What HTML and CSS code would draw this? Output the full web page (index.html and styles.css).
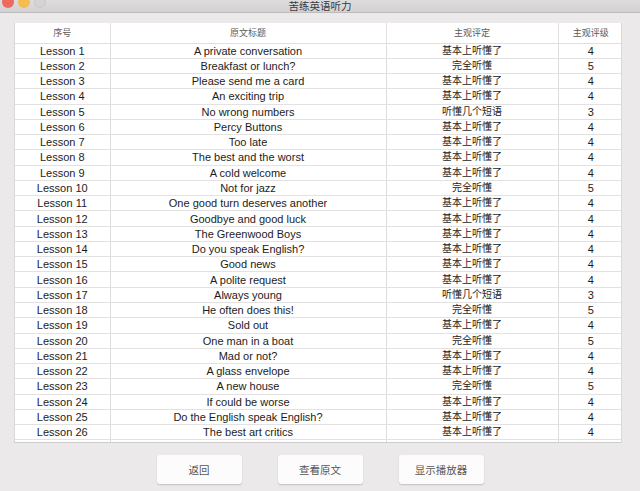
FILE: index.html
```html
<!DOCTYPE html>
<html lang="zh">
<head>
    <meta charset="UTF-8">
    <title>苦练英语听力</title>
    <link rel="stylesheet" href="styles.css">
</head>
<body>
    <div class="window">
        <div class="titlebar">
            <div class="lights">
                <span class="light red"></span>
                <span class="light yellow"></span>
                <span class="light grey"></span>
            </div>
            <div class="title">苦练英语听力</div>
            <div></div>
        </div>

        <div class="content">
            <div class="table-wrap">
                <table class="lessons">
                    <colgroup>
                        <col class="c-num">
                        <col class="c-title">
                        <col class="c-eval">
                        <col class="c-grade">
                    </colgroup>
                    <thead>
                        <tr>
                            <th>序号</th>
                            <th>原文标题</th>
                            <th>主观评定</th>
                            <th>主观评级</th>
                        </tr>
                    </thead>
                    <tbody id="rows"></tbody>
                </table>
            </div>

            <div class="actions">
                <button type="button">返回</button>
                <button type="button">查看原文</button>
                <button type="button">显示播放器</button>
            </div>
        </div>
    </div>

    <script>
        const lessons = [
            ['A private conversation', 4],
            ['Breakfast or lunch?', 5],
            ['Please send me a card', 4],
            ['An exciting trip', 4],
            ['No wrong numbers', 3],
            ['Percy Buttons', 4],
            ['Too late', 4],
            ['The best and the worst', 4],
            ['A cold welcome', 4],
            ['Not for jazz', 5],
            ['One good turn deserves another', 4],
            ['Goodbye and good luck', 4],
            ['The Greenwood Boys', 4],
            ['Do you speak English?', 4],
            ['Good news', 4],
            ['A polite request', 4],
            ['Always young', 3],
            ['He often does this!', 5],
            ['Sold out', 4],
            ['One man in a boat', 5],
            ['Mad or not?', 4],
            ['A glass envelope', 4],
            ['A new house', 5],
            ['If could be worse', 4],
            ['Do the English speak English?', 4],
            ['The best art critics', 4],
            ['No parking', 3]
        ];

        // grade -> how well it was understood
        const labels = { 3: '听懂几个短语', 4: '基本上听懂了', 5: '完全听懂' };

        const tbody = document.getElementById('rows');
        tbody.innerHTML = lessons.map(([title, grade], i) => `
            <tr>
                <td>Lesson ${i + 1}</td>
                <td>${title}</td>
                <td class="eval">${labels[grade]}</td>
                <td>${grade}</td>
            </tr>
        `).join('');
    </script>
</body>
</html>
```

FILE: styles.css
```css
* {
    box-sizing: border-box;
}

html, body {
    margin: 0;
    height: 100%;
}

body {
    font-family: "Liberation Sans", "Noto Sans CJK SC", sans-serif;
    background: #ebe9ea;
    overflow: hidden;
}

.window {
    height: 491px;
    display: flex;
    flex-direction: column;
}

.titlebar {
    height: 13px;
    flex: none;
    display: grid;
    grid-template-columns: 1fr auto 1fr;
    align-items: end;
    overflow: hidden;
    background: linear-gradient(#dedcdd, #d3d1d2);
    border-bottom: 1px solid #bdbbbc;
}

.lights {
    display: flex;
    gap: 4px;
    padding-left: 2px;
    align-self: start;
    margin-top: -4px;
}

.light {
    width: 12px;
    height: 12px;
    border-radius: 50%;
}

.red { background: #ec6a5f; }
.yellow { background: #f3bd4f; }
.grey { background: #d6d4d5; border: 1px solid #c9c7c8; }

.title {
    font-size: 10.5px;
    line-height: 12px;
    color: #3a3a3a;
    margin-bottom: 2px;
}

.content {
    flex: 1;
    padding: 10px 18px 0 14px;
}

.table-wrap {
    height: 420px;
    overflow: hidden;
    background: #fff;
    border-left: 1px solid #d9d7d8;
    border-right: 1px solid #d9d7d8;
    border-bottom: 1px solid #cfcdce;
}

.lessons {
    width: 100%;
    table-layout: fixed;
    border-collapse: collapse;
}

.c-num { width: 95px; }
.c-title { width: 276px; }
.c-eval { width: 172px; }
.c-grade { width: 65px; }

.lessons th {
    height: 20px;
    padding: 0;
    font-size: 9px;
    font-weight: normal;
    color: #5a5a5a;
    border-right: 1px solid #e4e2e3;
    border-bottom: 1px solid #e0dedf;
}

.lessons td {
    height: 15.27px;
    padding: 0;
    font-size: 11px;
    line-height: 14px;
    color: #1c1c1c;
    text-align: center;
    white-space: nowrap;
    border-right: 1px solid #dedcdd;
    border-bottom: 1px solid #e3e1e2;
}

.lessons td.eval {
    font-size: 10px;
}

.lessons th:last-child,
.lessons td:last-child {
    border-right: none;
}

.actions {
    display: flex;
    justify-content: center;
    gap: 36px;
    padding-top: 12px;
    padding-left: 4px;
}

button {
    width: 85px;
    height: 29px;
    border: none;
    border-radius: 3px;
    background: #fdfcfd;
    box-shadow: 0 1px 1.5px rgba(0, 0, 0, 0.18);
    font-family: "Noto Sans CJK SC", sans-serif;
    font-size: 10.5px;
    color: #555;
    cursor: pointer;
}
```
